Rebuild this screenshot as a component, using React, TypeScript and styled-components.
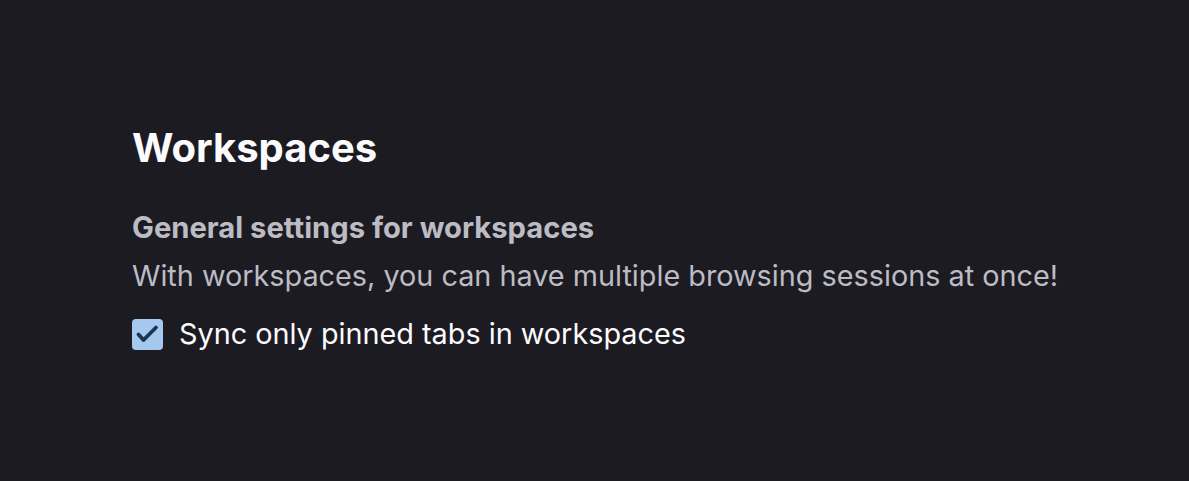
import React, { FC, useState } from 'react';
import styled, { createGlobalStyle } from 'styled-components';

const GlobalStyle = createGlobalStyle`
  html, body {
    margin: 0;
    padding: 0;
    background: #1c1b22;
  }
  body {
    font-family: Inter, "Noto Sans", sans-serif;
    color: #fbfbfe;
  }
`;

const Page = styled.div`
  width: 1189px;
  height: 481px;
  box-sizing: border-box;
  padding: 124px 0 0 132px;
  background: #1c1b22;
`;

const Title = styled.h1`
  margin: 0 0 38px;
  font-size: 40px;
  line-height: 48px;
  font-weight: 700;
  color: #fbfbfe;
`;

const SubTitle = styled.h2`
  margin: 0;
  font-size: 29.2px;
  line-height: 36px;
  font-weight: 700;
  color: #bcbcc4;
`;

const Description = styled.p`
  margin: 12px 0 20px;
  font-size: 28.8px;
  line-height: 36px;
  color: #bcbcc4;
`;

const CheckRow = styled.label`
  display: flex;
  align-items: center;
  gap: 16px;
  height: 40px;
  font-size: 28.8px;
  line-height: 40px;
  color: #fbfbfe;
  cursor: pointer;
`;

const Box = styled.span<{ $checked: boolean }>`
  flex: none;
  width: 31px;
  height: 31px;
  margin-top: 1px;
  border-radius: 4px;
  box-sizing: border-box;
  display: flex;
  background: ${(p) => (p.$checked ? '#a4c8ee' : 'transparent')};
  border: ${(p) => (p.$checked ? 'none' : '2px solid #8f8f9d')};
`;

const Checkbox: FC<{ checked: boolean }> = ({ checked }) => (
  <Box $checked={checked}>
    {checked && (
      <svg width="31" height="31" viewBox="0 0 31 31">
        <path
          d="M6.5 15.5l5 5.5L24 8.5"
          fill="none"
          stroke="#1c3550"
          strokeWidth="3.8"
          strokeLinecap="round"
          strokeLinejoin="round"
        />
      </svg>
    )}
  </Box>
);

const App: FC = () => {
  const [synced, setSynced] = useState(true);

  return (
    <Page>
      <GlobalStyle />
      <Title>Workspaces</Title>
      <SubTitle>General settings for workspaces</SubTitle>
      <Description>With workspaces, you can have multiple browsing sessions at once!</Description>
      <CheckRow onClick={() => setSynced(!synced)}>
        <Checkbox checked={synced} />
        Sync only pinned tabs in workspaces
      </CheckRow>
    </Page>
  );
};

export default App;
